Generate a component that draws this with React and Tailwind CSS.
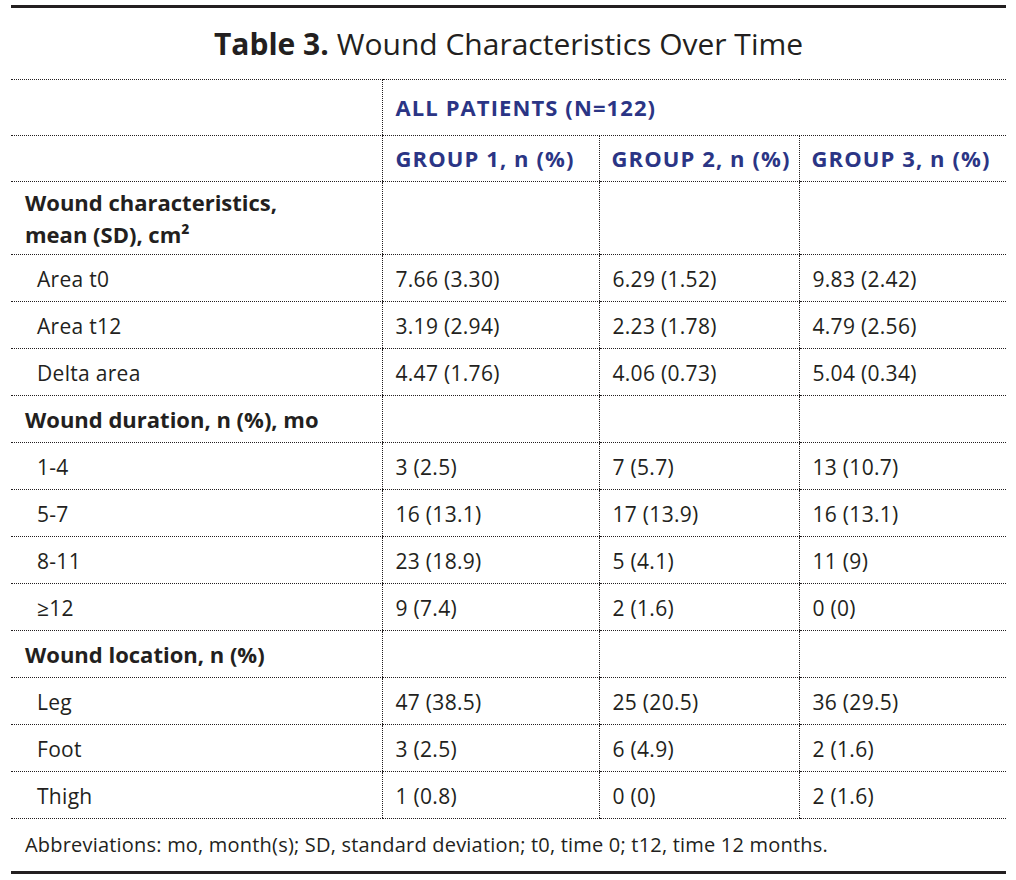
import React from "react";

const line = "border-dotted border-[#231f20]";

const rows = [
  { section: ["Wound characteristics,", "mean (SD), cm²"], tall: true },
  { label: "Area t0", values: ["7.66 (3.30)", "6.29 (1.52)", "9.83 (2.42)"] },
  { label: "Area t12", values: ["3.19 (2.94)", "2.23 (1.78)", "4.79 (2.56)"] },
  { label: "Delta area", values: ["4.47 (1.76)", "4.06 (0.73)", "5.04 (0.34)"] },
  { section: ["Wound duration, n (%), mo"] },
  { label: "1-4", values: ["3 (2.5)", "7 (5.7)", "13 (10.7)"] },
  { label: "5-7", values: ["16 (13.1)", "17 (13.9)", "16 (13.1)"] },
  { label: "8-11", values: ["23 (18.9)", "5 (4.1)", "11 (9)"] },
  { label: "≥12", values: ["9 (7.4)", "2 (1.6)", "0 (0)"] },
  { section: ["Wound location, n (%)"] },
  { label: "Leg", values: ["47 (38.5)", "25 (20.5)", "36 (29.5)"] },
  { label: "Foot", values: ["3 (2.5)", "6 (4.9)", "2 (1.6)"] },
  { label: "Thigh", values: ["1 (0.8)", "0 (0)", "2 (1.6)"] },
];

const TableRow = ({ row }) => {
  if (row.section) {
    return (
      <tr className={row.tall ? "h-[73px]" : "h-[47px]"}>
        <td className={`border-b ${line} pl-[14px] font-bold text-[22px] tracking-normal leading-[32px] align-middle`}>
          {row.section.map((t) => (
            <div key={t}>{t}</div>
          ))}
        </td>
        <td className={`border-b border-l ${line}`} />
        <td className={`border-b border-l ${line}`} />
        <td className={`border-b border-l ${line}`} />
      </tr>
    );
  }
  return (
    <tr className="h-[47px]">
      <td className={`border-b ${line} pl-[26px] pt-[4px]`}>{row.label}</td>
      {row.values.map((v, i) => (
        <td key={i} className={`border-b border-l ${line} pl-[13px] pt-[4px]`}>
          {v}
        </td>
      ))}
    </tr>
  );
};

export default function App() {
  return (
    <div className="w-[1016px] h-[880px] bg-white text-[#231f20] font-['Open_Sans',sans-serif] pt-[5px] pl-[11px] pr-[10px]">
      <div className="border-t-[3px] border-[#231f20]" />
      <h1 className="h-[71px] flex items-center justify-center pt-[1px] text-[30px] leading-none">
        <span className="font-bold mr-[8px]">Table 3.</span>
        <span>Wound Characteristics Over Time</span>
      </h1>
      <table className="w-full table-fixed border-collapse text-[21px] tracking-[0.3px]">
        <colgroup>
          <col className="w-[371px]" />
          <col className="w-[217px]" />
          <col className="w-[200px]" />
          <col className="w-[207px]" />
        </colgroup>
        <thead className="text-[#2b3585] font-bold text-[22px] tracking-[1.1px]">
          <tr className="h-[56px]">
            <th className={`border-t border-b ${line}`} />
            <th colSpan={3} className={`border-t border-b border-l ${line} text-left pl-[13px] font-bold`}>
              ALL PATIENTS (N=122)
            </th>
          </tr>
          <tr className="h-[46px]">
            <th className={`border-b ${line}`} />
            <th className={`border-b border-l ${line} text-left pl-[13px] font-bold`}>GROUP 1, n (%)</th>
            <th className={`border-b border-l ${line} text-left pl-[12px] font-bold`}>GROUP 2, n (%)</th>
            <th className={`border-b border-l ${line} text-left pl-[12px] font-bold`}>GROUP 3, n (%)</th>
          </tr>
        </thead>
        <tbody>
          {rows.map((row, i) => (
            <TableRow key={i} row={row} />
          ))}
        </tbody>
      </table>
      <p className="h-[52px] flex items-center pl-[14px] text-[20px] tracking-[0.2px]">
        Abbreviations: mo, month(s); SD, standard deviation; t0, time 0; t12, time 12 months.
      </p>
      <div className="border-t-[3px] border-[#231f20]" />
    </div>
  );
}
